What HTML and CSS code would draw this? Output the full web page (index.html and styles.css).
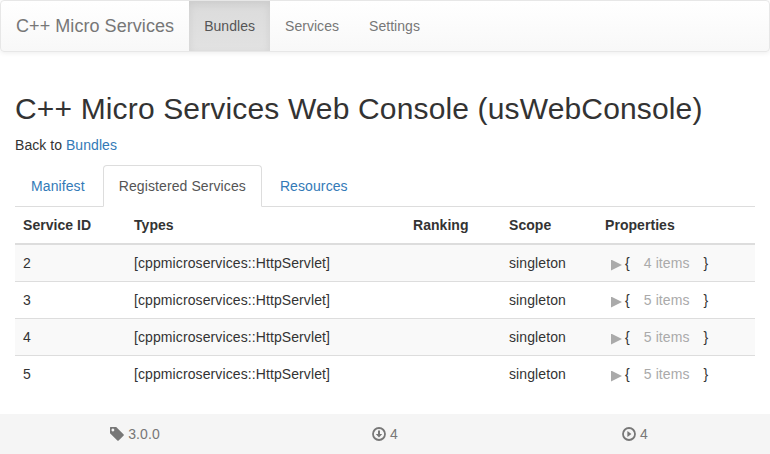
FILE: index.html
```html
<!DOCTYPE html>
<html lang="en">
<head>
<meta charset="utf-8">
<title>C++ Micro Services</title>
<link rel="stylesheet" href="styles.css">
</head>
<body>
<nav class="navbar">
  <a class="brand" href="#">C++ Micro Services</a>
  <a class="nav-link active" href="#">Bundles</a>
  <a class="nav-link" href="#">Services</a>
  <a class="nav-link" href="#">Settings</a>
</nav>
<main class="content">
  <h2>C++ Micro Services Web Console (usWebConsole)</h2>
  <p class="back">Back to <a href="#">Bundles</a></p>
  <ul class="tabs">
    <li><a href="#">Manifest</a></li>
    <li><a class="current" href="#">Registered Services</a></li>
    <li><a href="#">Resources</a></li>
  </ul>
  <table class="services">
    <colgroup><col class="c-id"><col class="c-types"><col class="c-rank"><col class="c-scope"><col></colgroup>
    <thead>
      <tr><th>Service ID</th><th>Types</th><th>Ranking</th><th>Scope</th><th>Properties</th></tr>
    </thead>
    <tbody>
      <tr><td>2</td><td>[cppmicroservices::HttpServlet]</td><td></td><td>singleton</td><td><div class="json"><i class="arrow"></i><span>{</span><span class="count">4 items</span><span>}</span></div></td></tr>
      <tr><td>3</td><td>[cppmicroservices::HttpServlet]</td><td></td><td>singleton</td><td><div class="json"><i class="arrow"></i><span>{</span><span class="count">5 items</span><span>}</span></div></td></tr>
      <tr><td>4</td><td>[cppmicroservices::HttpServlet]</td><td></td><td>singleton</td><td><div class="json"><i class="arrow"></i><span>{</span><span class="count">5 items</span><span>}</span></div></td></tr>
      <tr><td>5</td><td>[cppmicroservices::HttpServlet]</td><td></td><td>singleton</td><td><div class="json"><i class="arrow"></i><span>{</span><span class="count">5 items</span><span>}</span></div></td></tr>
    </tbody>
  </table>
</main>
<footer class="footer">
  <div class="stat"><svg width="14" height="14" viewBox="0 0 14 14"><path fill="currentColor" fill-rule="evenodd" d="M0 .6Q0 0 .6 0H6.2L13.7 7.6Q14 8 13.7 8.4L8.4 13.7Q8 14 7.6 13.7L0 6.2ZM2.9 1.6a1.4 1.4 0 1 0 .01 0Z"/></svg><span>3.0.0</span></div>
  <div class="stat"><svg width="14" height="14" viewBox="0 0 14 14"><circle cx="7" cy="7" r="6" fill="none" stroke="currentColor" stroke-width="1.8"/><path fill="currentColor" d="M6 3.6H8V7H10.2L7 10.4L3.8 7H6Z"/></svg><span>4</span></div>
  <div class="stat"><svg width="14" height="14" viewBox="0 0 14 14"><circle cx="7" cy="7" r="6" fill="none" stroke="currentColor" stroke-width="1.8"/><path fill="currentColor" d="M5.4 4L9.4 7L5.4 10Z"/></svg><span>4</span></div>
</footer>
</body>
</html>
```
FILE: styles.css
```css
* { box-sizing: border-box; }
body {
  margin: 0;
  height: 454px;
  display: flex;
  flex-direction: column;
  font: 14px/20px "Nimbus Sans", "Liberation Sans", Arial, sans-serif;
  letter-spacing: .1px;
  color: #333;
  background: #fff;
}
a { color: #337ab7; text-decoration: none; }
.navbar {
  display: flex;
  height: 52px;
  border: 1px solid #e7e7e7;
  border-radius: 4px;
  background: linear-gradient(#fff, #f8f8f8);
  box-shadow: inset 0 1px 0 rgba(255,255,255,.15), 0 1px 5px rgba(0,0,0,.075);
}
.navbar a { padding: 15px; color: #777; white-space: nowrap; letter-spacing: .04px; }
.navbar .brand { font-size: 18px; letter-spacing: .06px; }
.navbar .active {
  color: #555;
  background: linear-gradient(#dbdbdb, #e2e2e2);
  box-shadow: inset 0 3px 9px rgba(0,0,0,.075);
}
.content { padding: 0 15px; flex: 1; }
h2 {
  margin: 40px 0 10px;
  font-size: 30px;
  line-height: 33px;
  font-weight: 500;
  letter-spacing: .15px;
  white-space: nowrap;
}
.back { margin: 0 0 10px; letter-spacing: .05px; }
.tabs {
  display: flex;
  margin: 0;
  padding: 0;
  list-style: none;
  border-bottom: 1px solid #ddd;
}
.tabs li { margin-bottom: -1px; }
.tabs a {
  display: block;
  margin-right: 2px;
  padding: 10px 15px;
  border: 1px solid transparent;
  border-radius: 4px 4px 0 0;
}
.tabs .current { color: #555; background: #fff; border-color: #ddd #ddd #fff; }
.services {
  width: 100%;
  table-layout: fixed;
  border-collapse: collapse;
}
.c-id { width: 111px; }
.c-types { width: 279px; }
.c-rank, .c-scope { width: 96px; }
.services th { padding: 8px; text-align: left; border-bottom: 2px solid #ddd; letter-spacing: .05px; }
.services td { padding: 8px; border-top: 1px solid #ddd; }
.services tbody tr:nth-child(odd) { background: #f9f9f9; }
.json { display: flex; height: 20px; }
.arrow {
  width: 11px;
  height: 11px;
  margin: 6.5px 3px 0 6px;
  background: #aaa;
  clip-path: polygon(0 0, 100% 50%, 0 100%);
}
.count { margin: 0 14px; color: #aaa; }
.footer {
  display: flex;
  height: 40px;
  padding: 0 10px;
  background: #f5f5f5;
  color: #777;
}
.stat { flex: 1; display: flex; justify-content: center; align-items: center; gap: 4px; }
.stat svg { margin-top: -1px; }
```
